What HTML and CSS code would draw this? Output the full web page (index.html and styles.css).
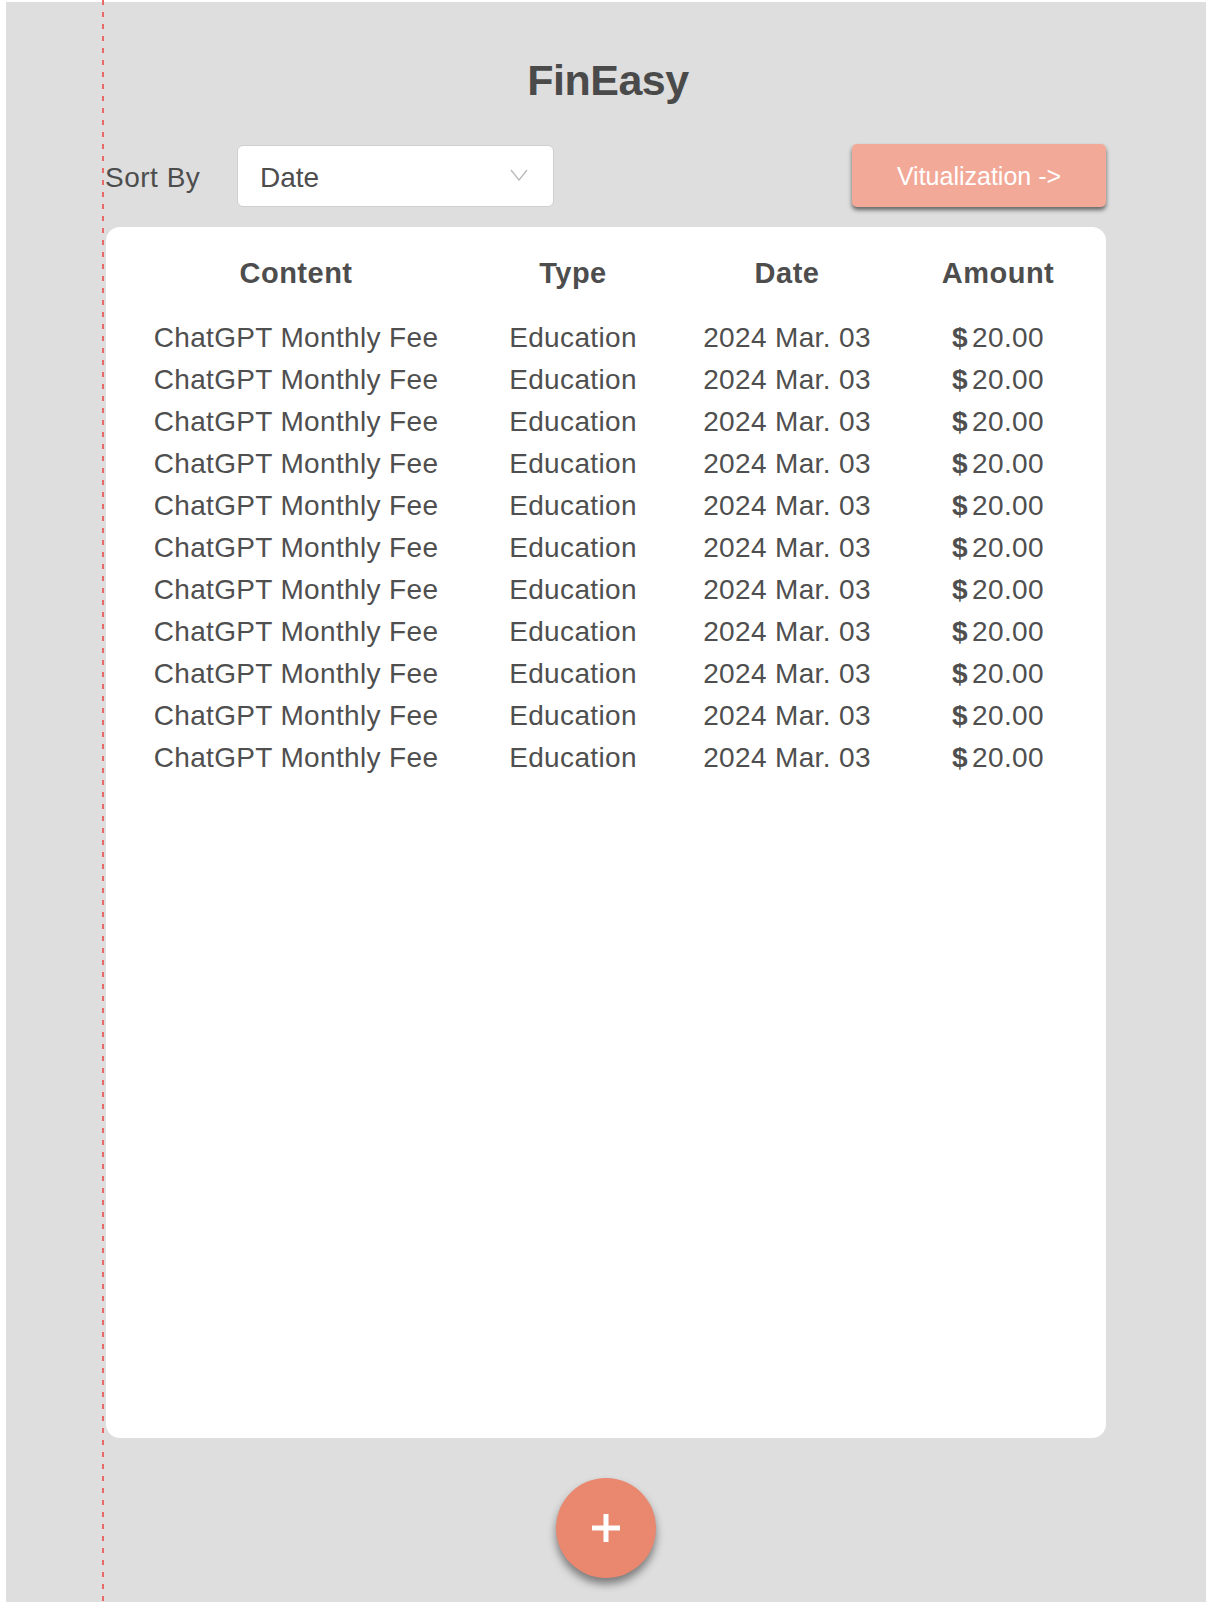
FILE: index.html
```html
<!DOCTYPE html>
<html lang="en">
<head>
<meta charset="utf-8">
<title>FinEasy</title>
<link rel="stylesheet" href="styles.css">
</head>
<body>
<div class="page">
  <div class="app">
    <h1 class="title">FinEasy</h1>
    <div class="controls">
      <span class="sort-label">Sort By</span>
      <div class="select">
        <span class="select-value">Date</span>
        <svg class="chevron" width="18" height="12" viewBox="0 0 18 12"><polyline points="1,1 9,11 17,1" fill="none" stroke="#b8b8b8" stroke-width="1.3"/></svg>
      </div>
      <button class="viz-btn">Vitualization -&gt;</button>
    </div>
    <div class="card">
      <div class="row head">
        <div>Content</div><div>Type</div><div>Date</div><div>Amount</div>
      </div>
      <div class="rows">
        <div class="row"><div>ChatGPT Monthly Fee</div><div>Education</div><div>2024 Mar. 03</div><div><b class="cur">$</b>20.00</div></div>
        <div class="row"><div>ChatGPT Monthly Fee</div><div>Education</div><div>2024 Mar. 03</div><div><b class="cur">$</b>20.00</div></div>
        <div class="row"><div>ChatGPT Monthly Fee</div><div>Education</div><div>2024 Mar. 03</div><div><b class="cur">$</b>20.00</div></div>
        <div class="row"><div>ChatGPT Monthly Fee</div><div>Education</div><div>2024 Mar. 03</div><div><b class="cur">$</b>20.00</div></div>
        <div class="row"><div>ChatGPT Monthly Fee</div><div>Education</div><div>2024 Mar. 03</div><div><b class="cur">$</b>20.00</div></div>
        <div class="row"><div>ChatGPT Monthly Fee</div><div>Education</div><div>2024 Mar. 03</div><div><b class="cur">$</b>20.00</div></div>
        <div class="row"><div>ChatGPT Monthly Fee</div><div>Education</div><div>2024 Mar. 03</div><div><b class="cur">$</b>20.00</div></div>
        <div class="row"><div>ChatGPT Monthly Fee</div><div>Education</div><div>2024 Mar. 03</div><div><b class="cur">$</b>20.00</div></div>
        <div class="row"><div>ChatGPT Monthly Fee</div><div>Education</div><div>2024 Mar. 03</div><div><b class="cur">$</b>20.00</div></div>
        <div class="row"><div>ChatGPT Monthly Fee</div><div>Education</div><div>2024 Mar. 03</div><div><b class="cur">$</b>20.00</div></div>
        <div class="row"><div>ChatGPT Monthly Fee</div><div>Education</div><div>2024 Mar. 03</div><div><b class="cur">$</b>20.00</div></div>
      </div>
    </div>
    <div class="fab-wrap">
      <button class="fab" aria-label="Add">
        <svg width="28" height="28" viewBox="0 0 28 28"><rect x="0" y="11.5" width="28" height="5" fill="#fff"/><rect x="11.5" y="0" width="5" height="28" fill="#fff"/></svg>
      </button>
    </div>
  </div>
</div>
<div class="guide"></div>
</body>
</html>
```
FILE: styles.css
```css
html, body {
  margin: 0;
  padding: 0;
  background: #ffffff;
}
body {
  font-family: "Liberation Sans", Arial, sans-serif;
  color: #4f4f4f;
}
.page {
  margin: 2px 6px 0 6px;
  width: 1200px;
  height: 1600px;
  background: #dedede;
}
.app {
  width: 1000px;
  margin: 0 auto;
  padding-top: 53px;
  display: flex;
  flex-direction: column;
}
.title {
  margin: 0;
  height: 50px;
  line-height: 50px;
  font-size: 43px;
  font-weight: bold;
  letter-spacing: -0.5px;
  text-align: center;
  color: #4a4a4a;
  padding-left: 4px;
}
.controls {
  margin-top: 39px;
  height: 63px;
  display: flex;
  align-items: center;
}
.sort-label {
  width: 132px;
  margin-left: -1px;
  padding-top: 4px;
  font-size: 28px;
  line-height: 34px;
  letter-spacing: 0.5px;
  color: #4d4d4d;
}
.select {
  width: 317px;
  height: 62px;
  margin-top: 1px;
  box-sizing: border-box;
  background: #ffffff;
  border: 1px solid #cfcfcf;
  border-radius: 6px;
  display: flex;
  align-items: center;
  justify-content: space-between;
  padding: 0 25px 0 22px;
}
.select-value {
  padding-top: 4px;
  font-size: 28px;
  line-height: 34px;
  color: #4d4d4d;
}
.chevron {
  display: block;
  margin-top: -3px;
}
.viz-btn {
  margin-left: auto;
  width: 254px;
  height: 63px;
  border: none;
  border-radius: 5px;
  background: #f2a998;
  color: #ffffff;
  font-family: "Liberation Sans", Arial, sans-serif;
  font-size: 25px;
  box-shadow: 0 3px 4px rgba(0, 0, 0, 0.55);
  padding: 2px 0 0 0;
}
.card {
  margin-top: 20px;
  height: 1211px;
  box-sizing: border-box;
  background: #ffffff;
  border-radius: 14px;
  padding: 25px 0 0 24px;
}
.row {
  display: grid;
  grid-template-columns: 332px 222px 206px 1fr;
  text-align: center;
  font-size: 28px;
  line-height: 42px;
  letter-spacing: 0.35px;
  color: #4f4f4f;
  white-space: nowrap;
}
.row.head {
  font-size: 29px;
  font-weight: bold;
  letter-spacing: 0.5px;
  color: #4d4d4d;
}
.rows {
  margin-top: 23px;
}
.cur {
  font-weight: bold;
  margin-right: 4px;
}
.fab-wrap {
  margin-top: 40px;
  display: flex;
  justify-content: center;
}
.fab {
  width: 100px;
  height: 100px;
  border-radius: 50%;
  border: none;
  padding: 0;
  background: #e9876f;
  box-shadow: 0 6px 9px rgba(0, 0, 0, 0.45);
  display: flex;
  align-items: center;
  justify-content: center;
}
.fab svg {
  display: block;
}
.guide {
  position: absolute;
  left: 102px;
  top: 0;
  width: 2px;
  height: 1608px;
  background: repeating-linear-gradient(to bottom, #e8696a 0 5px, transparent 5px 12px);
  pointer-events: none;
}
```
